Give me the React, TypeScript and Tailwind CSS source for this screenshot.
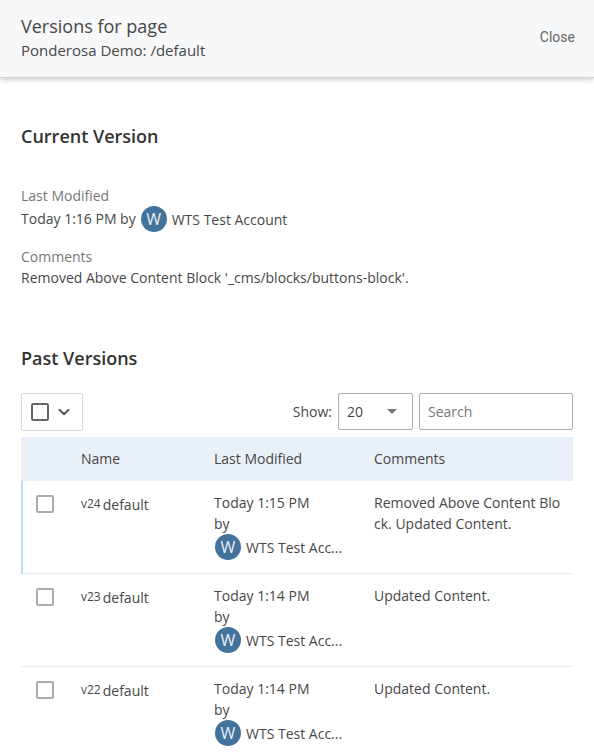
import React from 'react';
import { ChevronDown } from 'lucide-react';

interface Version {
  id: string;
  name: string;
  modified: string;
  comments: string;
  active?: boolean;
}

const versions: Version[] = [
  {
    id: 'v24',
    name: 'default',
    modified: 'Today 1:15 PM',
    comments: 'Removed Above Content Block. Updated Content.',
    active: true,
  },
  { id: 'v23', name: 'default', modified: 'Today 1:14 PM', comments: 'Updated Content.' },
  { id: 'v22', name: 'default', modified: 'Today 1:14 PM', comments: 'Updated Content.' },
];

// Long account names are shortened in the narrow table column
const shorten = (name: string, max: number) =>
  name.length > max ? `${name.slice(0, max)}...` : name;

const User: React.FC<{ name: string }> = ({ name }) => (
  <span className="flex items-center gap-[5px] pl-px">
    <span className="flex size-[26px] shrink-0 items-center justify-center rounded-full bg-[#43739b] text-base text-[#e9f0f8]">
      {name[0]}
    </span>
    <span className="whitespace-nowrap">{name}</span>
  </span>
);

const App: React.FC = () => {
  return (
    <div className="font-['Open_Sans',sans-serif] text-sm leading-[21px] text-[#474747]">
      <header className="flex items-center justify-between border-b border-[#d0d3d6] bg-[#f7f8fa] px-[21px] pt-[13px] pb-4 shadow-[0_2px_5px_rgba(0,0,0,0.2)]">
        <div>
          <h1 className="text-lg leading-[26px]">Versions for page</h1>
          <p className="text-[15px] leading-[22px]">Ponderosa Demo: /default</p>
        </div>
        <button type="button" className="font-['Roboto',sans-serif] text-[#666] -mr-0.5">
          Close
        </button>
      </header>

      <main className="px-[21px]">
        {/* Current version */}
        <section className="pt-11">
          <h2 className="text-lg leading-7 font-semibold text-[#333]">Current Version</h2>
          <dl className="pt-[35px]">
            <dt className="text-[#777]">Last Modified</dt>
            <dd className="flex items-start gap-1">
              <span className="pt-0.5">Today 1:16 PM by</span>
              <User name="WTS Test Account" />
            </dd>
            <dt className="pt-3.5 text-[#777]">Comments</dt>
            <dd>Removed Above Content Block '_cms/blocks/buttons-block'.</dd>
          </dl>
        </section>

        {/* Past versions */}
        <section className="pt-14">
          <h2 className="text-lg leading-7 font-semibold text-[#333]">Past Versions</h2>
          <div className="flex items-start justify-between pt-[21px] pb-1.5">
            <div className="flex h-[38px] items-center gap-1.5 rounded-xs border border-[#d3d8df] px-[9px]">
              <input
                type="checkbox"
                aria-label="Select all versions"
                className="size-[18px] appearance-none rounded-xs border-2 border-[#666]"
              />
              <button type="button" aria-label="Selection options">
                <ChevronDown className="size-[18px] text-[#555]" strokeWidth={2.5} />
              </button>
            </div>
            <div className="flex items-center gap-1.5">
              <label htmlFor="page-size">Show:</label>
              <div className="relative">
                <select
                  id="page-size"
                  defaultValue="20"
                  className="block h-[37px] w-[75px] appearance-none rounded-xs border border-[#a9adb1] bg-white px-2"
                >
                  <option>20</option>
                  <option>50</option>
                  <option>100</option>
                </select>
                <svg
                  className="pointer-events-none absolute top-4 right-4 h-[5px] w-2.5 text-[#777]"
                  viewBox="0 0 10 5"
                  fill="currentColor"
                >
                  <path d="M0 0h10L5 5z" />
                </svg>
              </div>
              <input
                type="search"
                aria-label="Search"
                placeholder="Search"
                className="h-[37px] w-[154px] rounded-xs border border-[#a9adb1] px-2 placeholder:text-[#777]"
              />
            </div>
          </div>

          <table className="w-full table-fixed border-separate border-spacing-0 text-left">
            <thead>
              <tr className="bg-[#e9f0f8]">
                <th className="w-[50px]" />
                <th className="w-[133px] px-2.5 pt-[11px] pb-3 font-normal">Name</th>
                <th className="w-40 px-2.5 pt-[11px] pb-3 font-normal">Last Modified</th>
                <th className="px-2.5 pt-[11px] pb-3 font-normal">Comments</th>
              </tr>
            </thead>
            <tbody>
              {versions.map((v) => (
                <tr key={v.id} className="align-top *:border-b *:border-b-[#e3eef7]">
                  <td className={v.active ? 'border-l-2 border-l-[#b9dcf7] pt-3.5 pl-[13px]' : 'pt-3.5 pl-[15px]'}>
                    <input
                      type="checkbox"
                      aria-label={`Select ${v.id}`}
                      className="block size-[18px] appearance-none rounded-xs border-2 border-[#a9adb1]"
                    />
                  </td>
                  <td className="px-2.5 pt-[13px]">
                    <span className="flex gap-0.5">
                      <span className="text-xs leading-[19px]">{v.id}</span>
                      <span>{v.name}</span>
                    </span>
                  </td>
                  <td className="px-2.5 pt-[11px] pb-[13px]">
                    <div>{v.modified}</div>
                    <div>by</div>
                    <User name={shorten('WTS Test Account', 12)} />
                  </td>
                  <td className="px-2.5 pt-[11px] break-all">{v.comments}</td>
                </tr>
              ))}
            </tbody>
          </table>
        </section>
      </main>
    </div>
  );
};

export default App;
